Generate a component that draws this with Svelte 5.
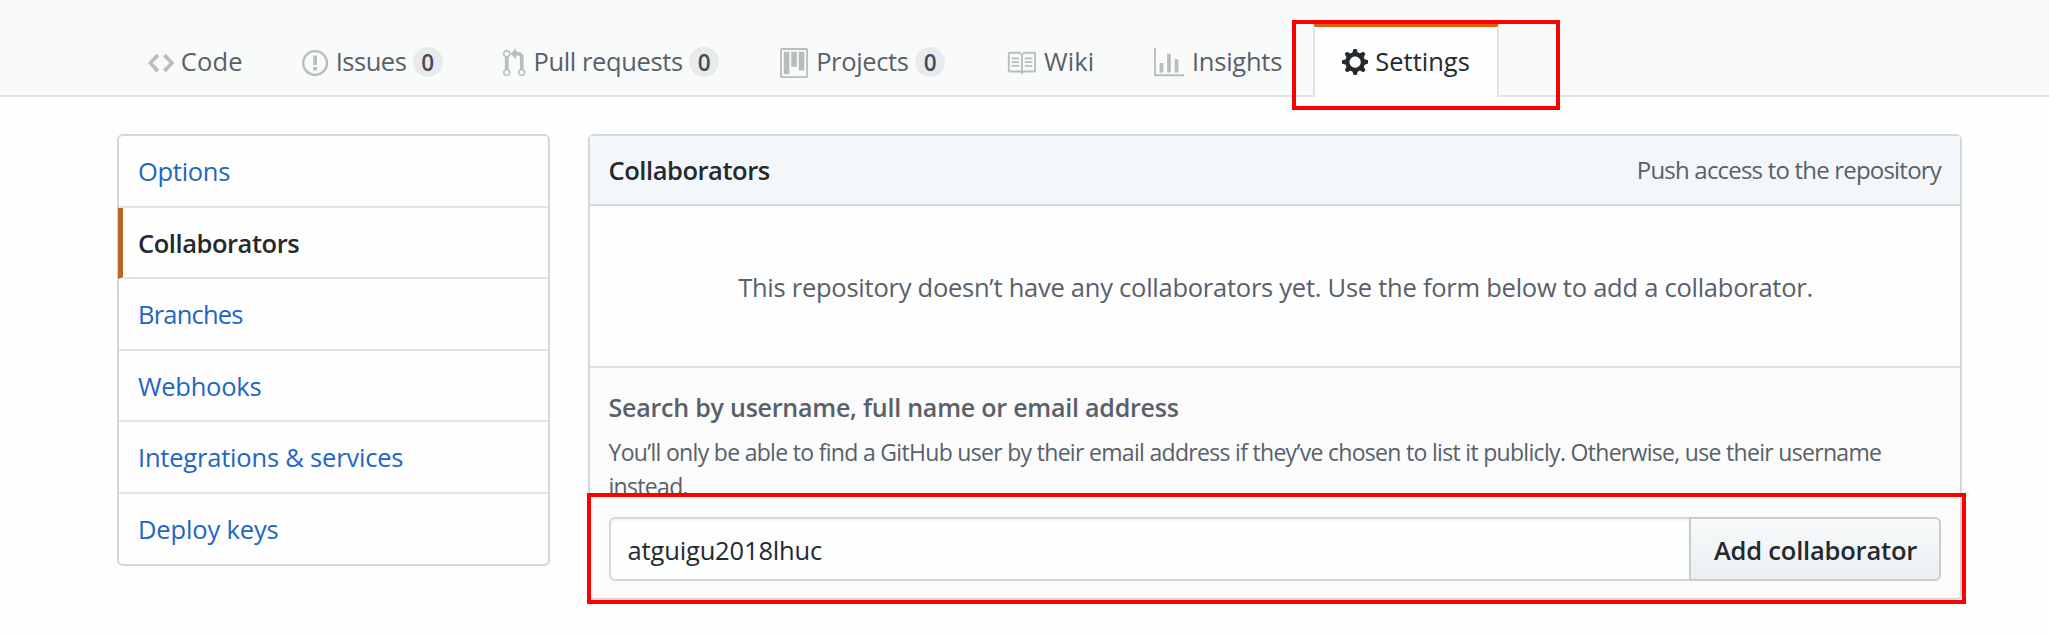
<script>
  const code = 'M9.5 3L8 4.5 11.5 8 8 11.5 9.5 13 14 8 9.5 3zm-5 0L0 8l4.5 5L6 11.5 2.5 8 6 4.5 4.5 3z';
  const issue = 'M7 2.3c3.14 0 5.7 2.56 5.7 5.7s-2.56 5.7-5.7 5.7A5.71 5.71 0 0 1 1.3 8c0-3.14 2.56-5.7 5.7-5.7zM7 1C3.14 1 0 4.14 0 8s3.14 7 7 7 7-3.14 7-7-3.14-7-7-7zm1 3H6v5h2V4zm0 6H6v2h2v-2z';
  const pull = 'M11 11.28V5c-.03-.78-.34-1.47-.94-2.06C9.46 2.35 8.78 2.03 8 2H7V0L4 3l3 3V4h1c.27.02.48.11.69.31.21.2.3.42.31.69v6.28A1.993 1.993 0 0 0 10 15a1.993 1.993 0 0 0 1-3.72zm-1 2.92c-.66 0-1.2-.55-1.2-1.2 0-.65.55-1.2 1.2-1.2.65 0 1.2.55 1.2 1.2 0 .65-.55 1.2-1.2 1.2zM4 3c0-1.11-.89-2-2-2a1.993 1.993 0 0 0-1 3.72v6.56A1.993 1.993 0 0 0 2 15a1.993 1.993 0 0 0 1-3.72V4.72c.59-.34 1-.98 1-1.72zm-.8 10c0 .66-.55 1.2-1.2 1.2-.65 0-1.2-.55-1.2-1.2 0-.65.55-1.2 1.2-1.2.65 0 1.2.55 1.2 1.2zM2 4.2C1.34 4.2.8 3.65.8 3c0-.65.55-1.2 1.2-1.2.65 0 1.2.55 1.2 1.2 0 .65-.55 1.2-1.2 1.2z';
  const project = 'M10 12h3V2h-3v10zm-4-2h3V2H6v8zm-4 4h3V2H2v12zm-1 1h13V1H1v14zM14 0H1a1 1 0 0 0-1 1v14a1 1 0 0 0 1 1h13a1 1 0 0 0 1-1V1a1 1 0 0 0-1-1z';
  const book = 'M3 5h4v1H3V5zm0 3h4V7H3v1zm0 2h4V9H3v1zm11-5h-4v1h4V5zm0 2h-4v1h4V7zm0 2h-4v1h4V9zm2-6v9c0 .55-.45 1-1 1H9.5l-1 1-1-1H2c-.55 0-1-.45-1-1V3c0-.55.45-1 1-1h5.5l1 1 1-1H15c.55 0 1 .45 1 1zm-8 .5L7.5 3H2v9h6V3.5zm7-.5H9.5l-.5.5V12h6V3z';
  const graph = 'M16 14v1H0V0h1v14h15zM5 13H3V8h2v5zm4 0H7V3h2v10zm4 0h-2V6h2v7z';
  const gear = 'M14 8.77v-1.6l-1.94-.64-.45-1.09.88-1.84-1.13-1.13-1.81.91-1.09-.45-.69-1.92h-1.6l-.63 1.94-1.11.45-1.84-.88-1.13 1.13.91 1.81-.45 1.09L0 7.23v1.59l1.94.64.45 1.09-.88 1.84 1.13 1.13 1.81-.91 1.09.45.69 1.92h1.59l.63-1.94 1.11-.45 1.84.88 1.13-1.13-.92-1.81.47-1.09L14 8.75v.02zM7 11c-1.66 0-3-1.34-3-3s1.34-3 3-3 3 1.34 3 3-1.34 3-3 3z';

  // vw: icon width in its 16-unit-high grid; gap: icon to label; track: letter-spacing
  const tabs = [
    { label: 'Code', icon: code, vw: 14, gap: 6.5, track: 0.2 },
    { label: 'Issues', icon: issue, vw: 14, gap: 7.5, track: -0.5, count: 0 },
    { label: 'Pull requests', icon: pull, vw: 12, gap: 8, track: -0.38, count: 0 },
    { label: 'Projects', icon: project, vw: 15, gap: 8, track: -0.35, count: 0 },
    { label: 'Wiki', icon: book, vw: 16, gap: 8, track: 0.1 },
    { label: 'Insights', icon: graph, vw: 16, gap: 8, track: -0.25 },
    { label: 'Settings', icon: gear, vw: 14, gap: 7, track: 0, selected: true }
  ];

  const menu = [
    { label: 'Options', track: -0.3 },
    { label: 'Collaborators', track: -0.45, selected: true },
    { label: 'Branches', track: -0.8 },
    { label: 'Webhooks', track: -0.25 },
    { label: 'Integrations & services', track: -0.2 },
    { label: 'Deploy keys', track: -0.15 }
  ];

  let username = $state('atguigu2018lhuc');
</script>

<div class="page">
  <nav class="tabs">
    {#each tabs as tab}
      <a class="tab" class:selected={tab.selected} href="#top">
        <svg width={tab.vw * 1.875} height="30" viewBox="0 0 {tab.vw} 16" fill-rule="evenodd"><path d={tab.icon} /></svg>
        <span class="name" style="margin-left:{tab.gap}px;letter-spacing:{tab.track}px">{tab.label}</span>
        {#if tab.count !== undefined}<span class="counter">{tab.count}</span>{/if}
      </a>
    {/each}
    <div class="mark mark-tab"></div>
  </nav>

  <main>
    <aside class="menu">
      {#each menu as item}
        <a class="item" class:selected={item.selected} href="#top" style="letter-spacing:{item.track}px">{item.label}</a>
      {/each}
    </aside>

    <section class="box">
      <header>
        <h3>Collaborators</h3>
        <span class="access">Push access to the repository</span>
      </header>
      <div class="blank">This repository doesn’t have any collaborators yet. Use the form below to add a collaborator.</div>
      <form class="add">
        <label for="who">Search by username, full name or email address</label>
        <p>You’ll only be able to find a GitHub user by their email address if they’ve chosen to list it publicly. Otherwise, use their username<br />instead.</p>
        <div class="row">
          <input id="who" type="text" bind:value={username} />
          <button type="button">Add collaborator</button>
        </div>
      </form>
      <div class="mark mark-form"></div>
    </section>
  </main>
</div>

<style>
  :global(body) { background: #fdfefd; }
  * { box-sizing: border-box; }
  .page {
    width: 2049px;
    height: 635px;
    overflow: hidden;
    background: #fdfefd;
    font: 400 25.5px/36px "Open Sans", "Noto Sans", sans-serif;
    color: #586069;
  }
  a { text-decoration: none; }

  .tabs {
    position: relative;
    display: grid;
    grid-template-columns: 154px 201px 277px 226px 148px 159px 186px;
    height: 97px;
    padding: 23px 0 0 148px;
    background: #f9fbfb;
    border-bottom: 2px solid #e2e5e6;
  }
  .tab {
    display: flex;
    align-items: center;
    height: 74px;
    padding-top: 5px;
    white-space: nowrap;
    color: #586069;
  }
  .tab svg { flex: none; fill: #b9bdbd; }
  .name { padding-bottom: 3px; }
  .tab.selected {
    padding: 0 0 0 27.5px;
    margin-left: -0.5px;
    border: 2px solid #e2e5e6;
    border-top: 4px solid #dd5e0c;
    border-bottom: 0;
    background: #fdfefd;
    color: #24292e;
  }
  .tab.selected svg { fill: #24292e; }
  .counter {
    width: 30px;
    height: 30px;
    margin: 0 0 2px 6.5px;
    border-radius: 15px;
    background: #e8eaec;
    color: #444d56;
    font-size: 22.5px;
    font-weight: 600;
    line-height: 31px;
    text-align: center;
  }

  main {
    display: flex;
    align-items: flex-start;
    gap: 38px;
    padding: 37px 0 0 117px;
  }
  .menu {
    width: 433px;
    border: 2px solid #d3d7da;
    border-radius: 6px;
  }
  .item {
    display: block;
    height: 71.6px;
    padding: 0 0 0 19px;
    border-bottom: 2px solid #e1e4e6;
    line-height: 71px;
    color: #1f66c4;
  }
  .item:last-child { height: 70px; border-bottom: 0; }
  .item.selected {
    margin-left: -1px;
    padding-left: 15px;
    border-left: 5px solid #bd6428;
    font-weight: 600;
    color: #24292e;
  }

  .box {
    position: relative;
    width: 1374px;
    height: 466px;
    border: 2px solid #d3d8db;
    border-radius: 6px;
  }
  .box header {
    display: flex;
    align-items: center;
    justify-content: space-between;
    height: 70px;
    padding: 0 19px 0 18.5px;
    border-bottom: 2px solid #d3d8da;
    background: #f3f7f9;
  }
  h3 { margin: 0; font-size: 25.5px; font-weight: 600; letter-spacing: -0.45px; color: #24292e; }
  .access { font-size: 24px; letter-spacing: -0.8px; }
  .blank {
    height: 162px;
    padding-left: 1px;
    border-bottom: 2px solid #dbdfe0;
    line-height: 163px;
    text-align: center;
    letter-spacing: -0.25px;
    white-space: nowrap;
  }
  .add {
    height: 230px;
    padding: 21px 19px 0 18.5px;
    background: #fafbfa;
    border-radius: 0 0 4px 4px;
  }
  label { display: block; font-size: 25px; font-weight: 600; letter-spacing: -0.22px; }
  p {
    margin: 11px 0 13.5px;
    font-size: 23px;
    line-height: 33.6px;
    letter-spacing: -0.69px;
    white-space: nowrap;
  }
  .row { display: flex; height: 64px; }
  input {
    flex: 1;
    min-width: 0;
    padding: 3px 17px 0;
    border: 2px solid #d3d7d9;
    border-right: 0;
    border-radius: 6px 0 0 6px;
    background: #fdfefe;
    box-shadow: inset 0 2px 3px rgba(27, 31, 35, 0.04);
    font: inherit;
    letter-spacing: -0.15px;
    color: #24292e;
    outline: 0;
  }
  button {
    width: 252px;
    padding: 3px 0 0 1px;
    border: 2px solid #c9cdd0;
    border-radius: 0 6px 6px 0;
    background: linear-gradient(#f8fafb, #ebeff2);
    font: inherit;
    font-weight: 600;
    letter-spacing: -0.2px;
    color: #24292e;
  }

  .mark { position: absolute; border: 4px solid #fe0000; pointer-events: none; }
  .mark-tab { left: 1292px; top: 20px; width: 268px; height: 90px; }
  .mark-form { left: -3px; top: 357px; width: 1379px; height: 111px; }
</style>
